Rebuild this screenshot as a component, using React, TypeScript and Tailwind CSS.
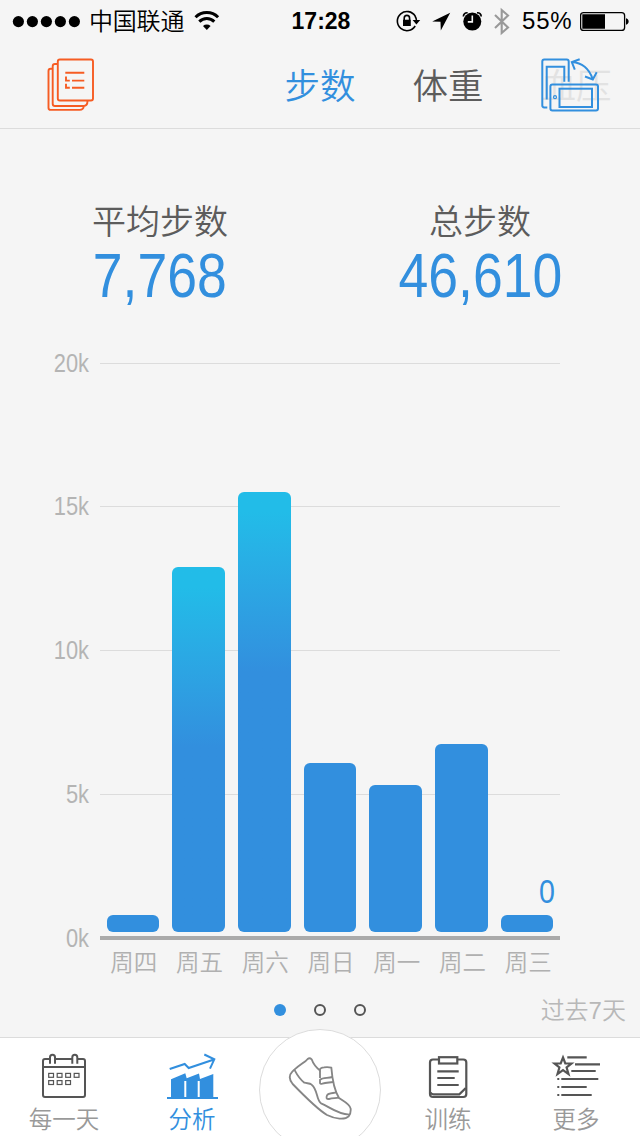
const days = [
  { label: "周四", height: 17, tall: false },
  { label: "周五", height: 365, tall: true },
  { label: "周六", height: 440, tall: true },
  { label: "周日", height: 169, tall: false },
  { label: "周一", height: 147, tall: false },
  { label: "周二", height: 188, tall: false },
  { label: "周三", height: 17, tall: false, value: "0" },
];

const StatusBar = () => {
  const dots = [18, 32, 46, 60, 74];

  return (
    <div className="grid grid-cols-3 h-10 items-center text-black">
      <div className="flex items-center">
        <svg className="shrink-0" width="88" height="40" viewBox="0 0 88 40">
          {dots.map((x) => (
            <circle key={x} cx={x + 0.4} cy="20.6" r="5.6" />
          ))}
        </svg>
        <span className="ml-px mt-0.5 w-24 shrink-0 text-[24px] leading-10 font-[350] whitespace-nowrap tracking-[-0.2px]">中国联通</span>
        <svg className="ml-[9px] shrink-0" width="26" height="40" viewBox="194 0 26 40" fill="none" stroke="#000" strokeWidth="3">
          <path d="M195.5 16.2a16 16 0 0 1 22.6 0" />
          <path d="M199.3 20.6a10.5 10.5 0 0 1 15 0" />
          <path d="M206.8 29l-3.8-4a5.6 5.6 0 0 1 7.6 0z" fill="#000" stroke="none" />
        </svg>
      </div>
      <div className="text-center text-[23px] leading-10 font-bold pl-0.5">17:28</div>
      <div className="flex items-center justify-end pr-[10px]">
        <svg className="shrink-0" width="118" height="40" viewBox="395 0 118 40">
          <g fill="none" stroke="#000" strokeWidth="1.6">
            <path d="M415.2 15.2a9.6 9.6 0 1 0 0 9.8" />
            <path d="M404.2 19.5v-2.2a2.7 2.9 0 0 1 5.4 0v2.2" />
            <path d="M415 15a9.6 9.6 0 0 1 1.5 5" />
          </g>
          <path d="M403 18.7h7.8v6.3H403zM412.6 19h7.6l-3.8 4.6z" />
          <path d="M450.2 11.8l-18 8.6 8.3.3.3 8.9z" />
          <circle cx="472.3" cy="20.6" r="9" />
          <path d="M472.3 14.5v6.4h-4.5" fill="none" stroke="#f5f5f5" strokeWidth="1.6" />
          <path d="M463.4 15.5c0-2.5 1.8-4 4.2-3.7M481.2 15.5c0-2.5-1.8-4-4.2-3.7" fill="none" stroke="#000" strokeWidth="1.7" />
          <path d="M495 14l13 12.5-6.3 5.5V9l6.3 5.5L495 27" fill="none" stroke="#999" strokeWidth="2.1" />
        </svg>
        <span className="ml-[9px] w-[51px] shrink-0 text-[24px] leading-10 tracking-[0.8px]">55%</span>
        <svg className="ml-[7px] shrink-0" width="50" height="40" viewBox="580 0 50 40">
          <rect x="580.6" y="11.6" width="44" height="17.8" rx="3" fill="none" stroke="#000" strokeWidth="1.3" />
          <path d="M582.3 13.2h22.7v14.6h-22.7zM626 17.3c3.6.6 3.6 5.8 0 6.4z" />
        </svg>
      </div>
    </div>
  );
};

const ReportsIcon = () => (
  <svg width="50" height="56" viewBox="46 56 50 56" fill="none" stroke="#f65c23" strokeWidth="1.9">
    <rect x="57.8" y="59.5" width="35.2" height="41" rx="2" />
    <path d="M57 64h-2q-2.3 0-2.3 2.3v37.4q0 2.3 2.3 2.3h28.5q4 0 4-5" />
    <path d="M52.3 68.8h-1.6q-2.2 0-2.2 2.2v36.7q0 2.2 2.2 2.2h29q3.8 0 4-3.6" />
    <path d="M65.3 72.7h19M72 80.6h12.3M72 87.7h12.3M66 76.5v4.1h3.8M66 83.7v4h3.8" />
  </svg>
);

const RotateIcon = () => (
  <svg width="60" height="56" viewBox="540 56 60 56" fill="none" stroke="#328fde" strokeWidth="2">
    <path d="M547.3 107.5h-3q-2-.2-2-2V61.5q0-2 2-2h22.4q2 0 2 2v20.2" />
    <path d="M546.7 99.5V66.7h17.6v15" />
    <rect x="550.4" y="84.5" width="47.6" height="26" rx="2" />
    <rect x="559.5" y="88.7" width="32.5" height="18.3" />
    <circle cx="555" cy="97.2" r="1.5" strokeWidth="1.2" />
    <path d="M572 62q15 1 20.7 17M579.7 59.2l-7.9 2.8 3 7.7M585 76.5l7.8 3 3.9-7.3" />
  </svg>
);

const CalendarIcon = () => {
  const cells = [[48.7, 1073.4], [57.2, 1073.4], [65.7, 1073.4], [74.2, 1073.4], [48.7, 1080.6], [57.2, 1080.6], [65.7, 1080.6]];

  return (
    <svg width="60" height="50" viewBox="34 1052 60 50" fill="none" stroke="#555" strokeWidth="2">
      <rect x="43" y="1059" width="42" height="38" rx="2" />
      <path d="M43 1067h42" />
      <path d="M50 1063.7v-6.5a2.5 2.5 0 0 1 5 0v6.5M72.3 1063.7v-6.5a2.5 2.5 0 0 1 5 0v6.5" fill="#fff" />
      {cells.map(([x, y]) => (
        <rect key={`${x}-${y}`} x={x} y={y} width="4.8" height="3.9" strokeWidth="1.2" />
      ))}
    </svg>
  );
};

const AnalysisIcon = () => (
  <svg width="60" height="50" viewBox="162 1052 60 50" fill="none" stroke="#328fde" strokeWidth="2">
    <path d="M169.7 1069l15-5 4 4 25.3-8.5M204.3 1054.5l10 4.8-4.3 9.4" />
    <path d="M171 1098v-18.7l14.3-6 1.4 5 12.3-4.8 1 5.5 13.3-5v24z" fill="#328fde" stroke="none" />
    <path d="M185.3 1081v16M198.7 1081v16" stroke="#fff" />
    <path d="M167 1098h51" />
  </svg>
);

const TrainingIcon = () => (
  <svg width="60" height="50" viewBox="418 1052 60 50" fill="none" stroke="#555" strokeWidth="2.2">
    <rect x="430" y="1059.5" width="36.3" height="37.5" rx="3" />
    <rect x="439" y="1057.2" width="18.3" height="6.3" fill="#fff" />
    <path d="M437.3 1071.3h21.4M437.3 1078h17.4M437.3 1085h21.4M430.5 1092.5q1 1.9 3 1.9h25.8l6.5-6.4" />
  </svg>
);

const MoreIcon = () => (
  <svg width="60" height="50" viewBox="546 1052 60 50" fill="none" stroke="#555" strokeWidth="2.2">
    <path d="M563 1057.5l2.3 6h6.2l-4.9 4 1.9 6.6-5.5-3.9-5.5 3.9 1.9-6.6-4.9-4h6.2z" />
    <path d="M567.3 1057.3h19.4M575 1064.3h25M571.3 1071h24.4M561.3 1079h37M561.3 1087h25.4M561.3 1095h30.4" />
    <path d="M557.3 1079h2M557.3 1087h2M557.3 1095h2" />
  </svg>
);

const ShoeIcon = () => (
  <svg width="66" height="66" viewBox="141 196 198 198" fill="none" stroke="#868686" strokeWidth="5.5" strokeLinejoin="round">
    <path d="M163 240C184 222 197 216 203 208Q209 203 215 209C219 221 223 229 240 243V239Q241 234 252 233Q264 231 274 234C276 260 283 302 297 325C310 335 329 342 332 357Q333 372 326 380C315 391 285 388 261 376C231 358 190 316 158 283Q141 262 157 246Z" />
    <path d="M163 240C171 255 180 270 193 279C202 282 208 279 215 285C234 300 228 330 243 341C268 351 290 373 328 375" />
    <path d="M240 243v22M277 262c-14 4-28 1-37 8v9q0 5 7 3c11-4 21-3 32-5M290 308c-12 3-25 2-29 9q-5 12 6 11c11-3 20-2 29-4" />
  </svg>
);

const Header = () => (
  <header className="h-[129px] border-b border-[#dcdcdc]">
    <StatusBar />
    <nav className="grid grid-cols-5 h-[88px] text-center text-[35.5px] leading-[94px] font-[350]">
      <div className="pl-[46px] pt-4">
        <ReportsIcon />
      </div>
      <div></div>
      <div className="text-[#328fde]">步数</div>
      <div className="text-[#5c5c5c]">体重</div>
      <div className="relative text-[#e2e2e2]">
        血压
        <div className="absolute left-7 top-4">
          <RotateIcon />
        </div>
      </div>
    </nav>
  </header>
);

const Total = ({ label, value }: { label: string; value: string }) => (
  <section className="flex flex-col items-center">
    <h2 className="h-[50px] text-[34px] leading-[52px] font-[350] text-[#5c5c5c]">{label}</h2>
    <p className="text-[63px] leading-[59px] text-[#328fde] scale-x-[0.85]">{value}</p>
  </section>
);

const Chart = () => {
  const ticks = ["20k", "15k", "10k", "5k", "0k"];

  return (
    <div>
      <div className="grid h-[603px]">
        <div className="[grid-area:1/1] flex flex-col justify-between">
          {ticks.map((tick) => (
            <div key={tick} className="flex h-7 items-center pr-20">
              <span className="w-[89px] text-right text-[26px] leading-[29px] text-[#b4b4b4] origin-right scale-x-[0.84]">{tick}</span>
              <div className={tick === "0k" ? "ml-[11px] flex-1 h-1 bg-[#aaa]" : "ml-[11px] flex-1 h-px bg-[#dcdcdc]"}></div>
            </div>
          ))}
        </div>
        <div className="[grid-area:1/1] z-10 grid grid-cols-7 items-end ml-[100px] mr-20 pb-5">
          {days.map((day) => (
            <div key={day.label} className="flex flex-col items-center">
              {day.value && (
                <span className="self-end mr-[5px] mb-[5px] text-[34px] leading-[38px] text-[#328fde] origin-right scale-x-[0.84]">{day.value}</span>
              )}
              <div
                className={
                  day.tall
                    ? "w-4/5 rounded-md bg-linear-to-b from-[#22bce8] from-[20px] to-[#328fde] to-[180px]"
                    : "w-4/5 rounded-md bg-[#328fde]"
                }
                style={{ height: day.height }}
              ></div>
            </div>
          ))}
        </div>
      </div>
      <div className="grid grid-cols-7 ml-[101px] mr-[79px] h-6 text-center text-[23.5px] leading-[22px] font-[350] text-[#b0b0b0]">
        {days.map((day) => (
          <span key={day.label}>{day.label}</span>
        ))}
      </div>
    </div>
  );
};

const Pager = () => (
  <div className="grid grid-cols-3 items-center mt-[18px] h-8">
    <div></div>
    <div className="flex justify-center gap-7">
      <div className="size-3 rounded-full bg-[#328fde]"></div>
      <div className="size-3 rounded-full border-2 border-[#555]"></div>
      <div className="size-3 rounded-full border-2 border-[#555]"></div>
    </div>
    <div className="pt-0.5 pr-[14px] text-right text-[24px] leading-[30px] font-[350] text-[#b8b8b8]">过去7天</div>
  </div>
);

const TabBar = () => (
  <footer className="relative grid grid-cols-5 h-[99px] mt-auto border-t border-[#dcdcdc] bg-white text-center text-[23.5px] leading-[36px] font-[350] text-[#999]">
    <div className="flex flex-col items-center pt-[14px]">
      <CalendarIcon />
      每一天
    </div>
    <div className="flex flex-col items-center pt-[14px] text-[#328fde]">
      <AnalysisIcon />
      分析
    </div>
    <div className="relative">
      <div className="absolute -top-[9px] left-[3px] size-[122px] rounded-full border border-[#dcdcdc] bg-white flex justify-center pt-[25px]">
        <ShoeIcon />
      </div>
    </div>
    <div className="flex flex-col items-center pt-[14px]">
      <TrainingIcon />
      训练
    </div>
    <div className="flex flex-col items-center pt-[14px]">
      <MoreIcon />
      更多
    </div>
  </footer>
);

export default function App() {
  return (
    <div className="flex flex-col w-[640px] h-[1136px] overflow-hidden bg-[#f5f5f5] font-['Liberation_Sans','Noto_Sans_CJK_SC',sans-serif]">
      <Header />
      <main>
        <div className="grid grid-cols-2 h-[220px] pt-[67px]">
          <Total label="平均步数" value="7,768" />
          <Total label="总步数" value="46,610" />
        </div>
        <Chart />
        <Pager />
      </main>
      <TabBar />
    </div>
  );
}
